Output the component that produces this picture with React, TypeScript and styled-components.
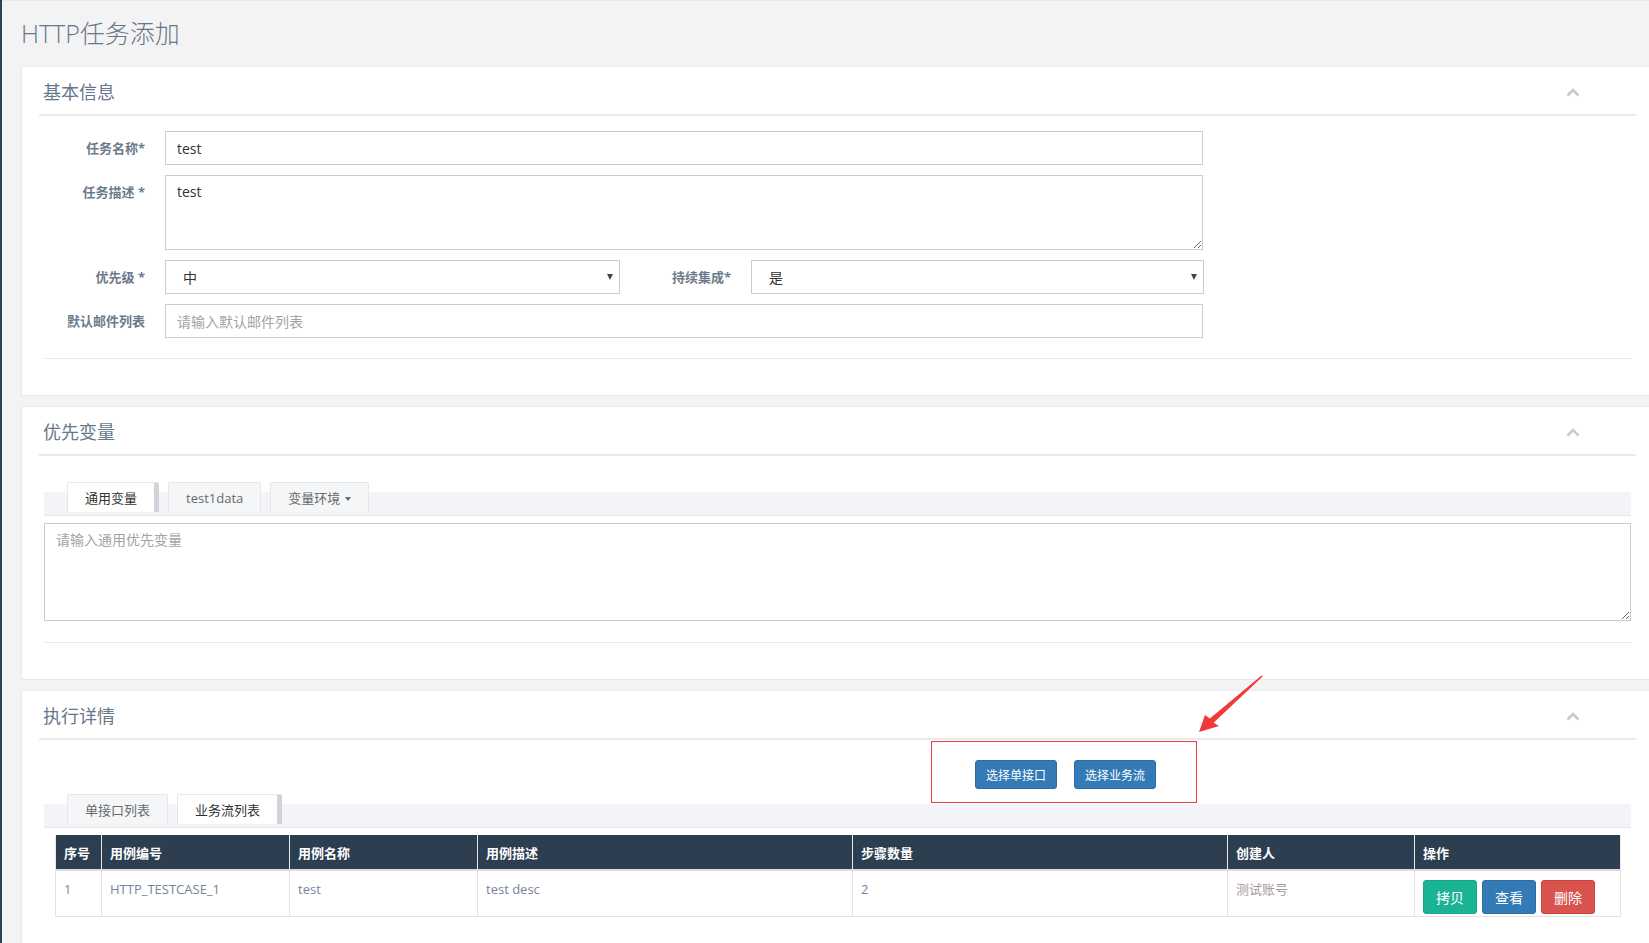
import React from 'react';
import styled, { createGlobalStyle } from 'styled-components';

const GlobalStyle = createGlobalStyle`
  html, body {
    margin: 0;
    padding: 0;
    overflow: hidden;
  }
  body {
    background: #f3f3f4;
    font-family: "Open Sans", "Noto Sans CJK SC", sans-serif;
    font-size: 13px;
    color: #676a6c;
  }
  * {
    box-sizing: border-box;
  }
`;

const Layout = styled.div`
  display: flex;
  min-height: 100vh;
`;

const Sidebar = styled.div`
  width: 2px;
  flex-shrink: 0;
  background: #2f4050;
`;

const Main = styled.main`
  flex: 1;
  min-width: 0;
  padding: 19px 0 40px 19px;
  border-top: 1px solid #e7eaec;
`;

const PageTitle = styled.h2`
  margin: 0 0 20px;
  font-size: 25px;
  font-weight: 300;
  line-height: 26px;
  color: #66788c;
`;

const Panel = styled.section`
  position: relative;
  width: 1633px;
  background: #fff;
  border: 1px solid #e7eaec;

  & + & {
    margin-top: 10px;
  }
`;

const PanelHead = styled.div`
  display: flex;
  align-items: center;
  justify-content: space-between;
  height: 49px;
  margin: 0 17px;
  padding: 1px 56px 0 4px;
  border-bottom: 2px solid #e7eaec;
`;

const PanelTitle = styled.h5`
  margin: 0;
  font-size: 18px;
  font-weight: 400;
  color: #66788c;
`;

const Chevron = styled.svg`
  width: 14px;
  height: 9px;
  margin-top: 3px;
`;

const PanelBody = styled.div<{ $top: number; $bottom: number }>`
  padding: ${({ $top }) => $top}px 22px ${({ $bottom }) => $bottom}px;
`;

const FormRows = styled.div`
  display: flex;
  flex-direction: column;
  gap: 10px;
`;

const FieldRow = styled.div`
  display: flex;
  align-items: flex-start;
`;

const Label = styled.label<{ $w: number }>`
  width: ${({ $w }) => $w}px;
  flex-shrink: 0;
  margin-right: 20px;
  padding-top: 8px;
  line-height: 18px;
  text-align: right;
  font-size: 13px;
  font-weight: 700;
  color: #6c7a89;
`;

const TextInput = styled.input`
  width: 1038px;
  height: 34px;
  padding: 6px 11px;
  border: 1px solid #ccc;
  border-radius: 0;
  font-family: inherit;
  font-size: 14px;
  color: #333;
  outline: none;

  &::placeholder {
    color: #a3a3a3;
  }
`;

const TextArea = styled.textarea<{ $w: string; $h: number }>`
  display: block;
  width: ${({ $w }) => $w};
  height: ${({ $h }) => $h}px;
  padding: 6px 11px;
  border: 1px solid #ccc;
  border-radius: 0;
  font-family: inherit;
  font-size: 14px;
  line-height: 20px;
  color: #333;
  outline: none;
  resize: vertical;

  &::placeholder {
    color: #a3a3a3;
  }
`;

const SelectBox = styled.div<{ $w: number }>`
  display: flex;
  align-items: center;
  justify-content: space-between;
  width: ${({ $w }) => $w}px;
  height: 34px;
  padding: 0 6px 0 17px;
  border: 1px solid #ccc;
  font-size: 14px;
  color: #333;
`;

const SelectCaret = styled.span`
  width: 0;
  height: 0;
  border-left: 3.5px solid transparent;
  border-right: 3.5px solid transparent;
  border-top: 6px solid #444;
`;

const Rule = styled.div<{ $gap: number }>`
  height: 1px;
  margin-top: ${({ $gap }) => $gap}px;
  background: #e7eaec;
`;

const TabStrip = styled.div`
  display: flex;
  align-items: flex-start;
  gap: 9px;
  height: 34px;
  padding-left: 23px;
  background: linear-gradient(#fff 0 10px, #f3f4f7 10px);
  border-bottom: 1px solid #e7eaec;
`;

const Tab = styled.div<{ $active?: boolean }>`
  display: flex;
  align-items: center;
  gap: 5px;
  height: 30px;
  padding: 0 17px;
  font-size: 13px;
  color: ${({ $active }) => ($active ? '#333' : '#676a6c')};
  background: ${({ $active }) => ($active ? '#fff' : '#f5f6f8')};
  border: 1px solid #e5e7ea;
  border-bottom: none;
  border-right: ${({ $active }) => ($active ? '5px solid #d0d4d9' : '1px solid #e5e7ea')};
  border-radius: 2px 2px 0 0;
`;

const TabCaret = styled.span`
  width: 0;
  height: 0;
  margin-top: 2px;
  border-left: 3.5px solid transparent;
  border-right: 3.5px solid transparent;
  border-top: 4px solid #676a6c;
`;

const VarArea = styled.div`
  margin-top: 7px;
`;

const ButtonRow = styled.div`
  position: relative;
  display: flex;
  gap: 17px;
  height: 54px;
  padding: 20px 0 0 931px;
`;

const AnnotationBox = styled.div`
  position: absolute;
  left: 887px;
  top: 1px;
  width: 266px;
  height: 62px;
  border: 1px solid #f03a3a;
  pointer-events: none;
`;

const Arrow = styled.svg`
  position: absolute;
  left: 1169px;
  top: -22px;
  width: 80px;
  height: 70px;
  z-index: 2;
`;

const PrimaryButton = styled.button`
  height: 29px;
  padding: 0 10px;
  border: 1px solid #2e6da4;
  border-radius: 3px;
  background: #337ab7;
  color: #fff;
  font-family: inherit;
  font-size: 12px;
`;

const Table = styled.table`
  width: 1565px;
  margin: 7px 11px 0;
  border-collapse: collapse;
  table-layout: fixed;
`;

const Th = styled.th<{ $w: number }>`
  width: ${({ $w }) => $w}px;
  height: 35px;
  padding: 0 8px;
  text-align: left;
  font-size: 13px;
  font-weight: 700;
  color: #fff;
  background: #2c3e50;
  border-left: 1px solid #e7eaec;
  border-right: 1px solid #e7eaec;
  border-bottom: 2px solid #ddd;
`;

const Td = styled.td<{ $tone?: string }>`
  height: 46px;
  padding: 9px 8px 1px;
  vertical-align: top;
  line-height: 18px;
  font-size: 13px;
  color: ${({ $tone }) => $tone || '#75849a'};
  border: 1px solid #e3e3e3;
`;

const ActionButton = styled.button<{ $bg: string; $border: string }>`
  height: 34px;
  padding: 0 12px;
  margin-right: 5px;
  border: 1px solid ${({ $border }) => $border};
  border-radius: 3px;
  background: ${({ $bg }) => $bg};
  color: #fff;
  font-family: inherit;
  font-size: 14px;
`;

const CollapseIcon = () => (
  <Chevron viewBox="0 0 14 9">
    <polyline points="1.5,7.5 7,2 12.5,7.5" fill="none" stroke="#c3cad1" strokeWidth="2.6" />
  </Chevron>
);

const columns = [
  { title: '序号', w: 46 },
  { title: '用例编号', w: 188 },
  { title: '用例名称', w: 188 },
  { title: '用例描述', w: 375 },
  { title: '步骤数量', w: 375 },
  { title: '创建人', w: 187 },
  { title: '操作', w: 206 },
];

export default function App() {
  return (
    <>
      <GlobalStyle />
      <Layout>
        <Sidebar />
        <Main>
          <PageTitle>HTTP任务添加</PageTitle>

          <Panel>
            <PanelHead>
              <PanelTitle>基本信息</PanelTitle>
              <CollapseIcon />
            </PanelHead>
            <PanelBody $top={15} $bottom={36}>
              <FormRows>
                <FieldRow>
                  <Label $w={101}>任务名称*</Label>
                  <TextInput defaultValue="test" />
                </FieldRow>
                <FieldRow>
                  <Label $w={101}>任务描述 *</Label>
                  <TextArea $w="1038px" $h={75} defaultValue="test" />
                </FieldRow>
                <FieldRow>
                  <Label $w={101}>优先级 *</Label>
                  <SelectBox $w={455}>
                    <span>中</span>
                    <SelectCaret />
                  </SelectBox>
                  <Label $w={111}>持续集成*</Label>
                  <SelectBox $w={453}>
                    <span>是</span>
                    <SelectCaret />
                  </SelectBox>
                </FieldRow>
                <FieldRow>
                  <Label $w={101}>默认邮件列表</Label>
                  <TextInput placeholder="请输入默认邮件列表" />
                </FieldRow>
              </FormRows>
              <Rule $gap={20} />
            </PanelBody>
          </Panel>

          <Panel>
            <PanelHead>
              <PanelTitle>优先变量</PanelTitle>
              <CollapseIcon />
            </PanelHead>
            <PanelBody $top={26} $bottom={36}>
              <TabStrip>
                <Tab $active>通用变量</Tab>
                <Tab>test1data</Tab>
                <Tab>
                  变量环境
                  <TabCaret />
                </Tab>
              </TabStrip>
              <VarArea>
                <TextArea $w="100%" $h={98} placeholder="请输入通用优先变量" />
              </VarArea>
              <Rule $gap={21} />
            </PanelBody>
          </Panel>

          <Panel>
            <Arrow viewBox="0 0 80 70">
              <polygon
                points="8,63 14,46 18.8,49.6 70.6,6.4 71.6,7.4 22.6,53.8 28,57"
                fill="#f03a3a"
              />
            </Arrow>
            <PanelHead>
              <PanelTitle>执行详情</PanelTitle>
              <CollapseIcon />
            </PanelHead>
            <PanelBody $top={0} $bottom={30}>
              <ButtonRow>
                <AnnotationBox />
                <PrimaryButton>选择单接口</PrimaryButton>
                <PrimaryButton>选择业务流</PrimaryButton>
              </ButtonRow>
              <TabStrip>
                <Tab>单接口列表</Tab>
                <Tab $active>业务流列表</Tab>
              </TabStrip>
              <Table>
                <thead>
                  <tr>
                    {columns.map((c) => (
                      <Th key={c.title} $w={c.w}>
                        {c.title}
                      </Th>
                    ))}
                  </tr>
                </thead>
                <tbody>
                  <tr>
                    <Td $tone="#9a8078">1</Td>
                    <Td>HTTP_TESTCASE_1</Td>
                    <Td>test</Td>
                    <Td>test desc</Td>
                    <Td>2</Td>
                    <Td $tone="#a8989f">测试账号</Td>
                    <Td>
                      <ActionButton $bg="#1ab394" $border="#18a689">拷贝</ActionButton>
                      <ActionButton $bg="#337ab7" $border="#2e6da4">查看</ActionButton>
                      <ActionButton $bg="#d9534f" $border="#d43f3a">删除</ActionButton>
                    </Td>
                  </tr>
                </tbody>
              </Table>
            </PanelBody>
          </Panel>
        </Main>
      </Layout>
    </>
  );
}
